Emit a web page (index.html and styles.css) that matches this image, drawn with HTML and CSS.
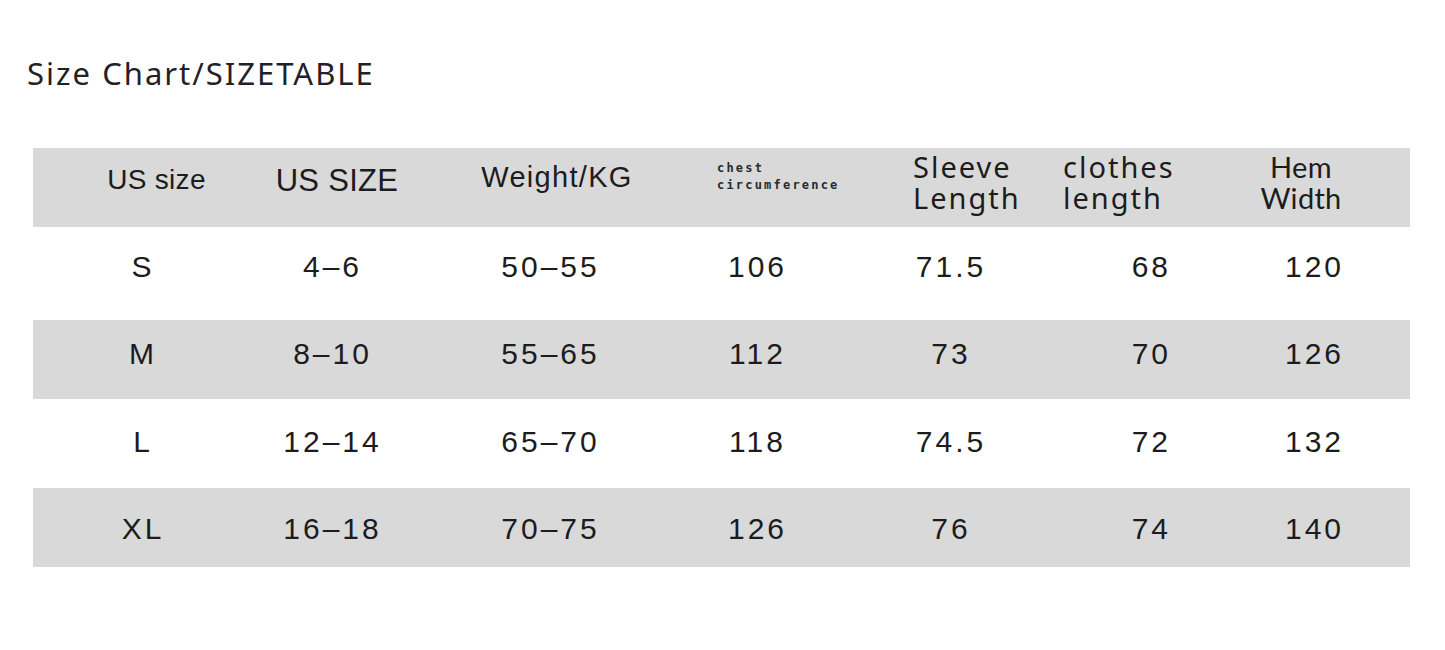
FILE: index.html
```html
<!DOCTYPE html>
<html>
<head>
<meta charset="utf-8">
<link rel="stylesheet" href="styles.css">
</head>
<body>
<div class="page">
  <h1 class="title">Size Chart/SIZETABLE</h1>
  <div class="table">
    <div class="row head">
      <div class="cell c1"><span class="h1t">US size</span></div>
      <div class="cell c2"><span class="h2t">US SIZE</span></div>
      <div class="cell c3"><span class="h3t">Weight/KG</span></div>
      <div class="cell c4"><span class="h4t"><span class="ln">chest</span><span class="ln">circumference</span></span></div>
      <div class="cell c5"><span class="h5t"><span class="ln">Sleeve</span><span class="ln">Length</span></span></div>
      <div class="cell c6"><span class="h6t"><span class="ln">clothes</span><span class="ln">length</span></span></div>
      <div class="cell c7"><span class="h7t"><span class="ln">Hem</span><span class="ln">Width</span></span></div>
    </div>
    <div class="row body r-s">
      <div class="cell c1">S</div>
      <div class="cell c2">4–6</div>
      <div class="cell c3">50–55</div>
      <div class="cell c4">106</div>
      <div class="cell c5">71.5</div>
      <div class="cell c6">68</div>
      <div class="cell c7">120</div>
    </div>
    <div class="row body r-m gray">
      <div class="cell c1">M</div>
      <div class="cell c2">8–10</div>
      <div class="cell c3">55–65</div>
      <div class="cell c4">112</div>
      <div class="cell c5">73</div>
      <div class="cell c6">70</div>
      <div class="cell c7">126</div>
    </div>
    <div class="row body r-l">
      <div class="cell c1">L</div>
      <div class="cell c2">12–14</div>
      <div class="cell c3">65–70</div>
      <div class="cell c4">118</div>
      <div class="cell c5">74.5</div>
      <div class="cell c6">72</div>
      <div class="cell c7">132</div>
    </div>
    <div class="row body r-xl gray">
      <div class="cell c1">XL</div>
      <div class="cell c2">16–18</div>
      <div class="cell c3">70–75</div>
      <div class="cell c4">126</div>
      <div class="cell c5">76</div>
      <div class="cell c6">74</div>
      <div class="cell c7">140</div>
    </div>
  </div>
</div>
</body>
</html>
```

FILE: styles.css
```css
html, body {
  margin: 0;
  padding: 0;
  background: #ffffff;
}

.page {
  width: 1445px;
  height: 650px;
  overflow: hidden;
  color: #1c1c1e;
}

.title {
  margin: 0;
  padding: 54px 0 0 27px;
  height: 92px;
  box-sizing: border-box;
  font-family: "Noto Sans", Lato, sans-serif;
  font-weight: 400;
  font-size: 31px;
  line-height: 38px;
  letter-spacing: 2px;
  color: #222226;
}

.table {
  margin-left: 33px;
  margin-top: 56px;
  width: 1377px;
}

.row {
  display: grid;
  grid-template-columns: 217px 162px 274px 140px 230px 166px 188px;
  box-sizing: border-box;
}

.gray, .head {
  background: #d9d9d9;
}

.head {
  height: 79px;
  align-items: start;
}

.body {
  font-family: "Liberation Sans", Arial, sans-serif;
  font-size: 30px;
  line-height: 30px;
  letter-spacing: 3px;
  align-items: start;
}

.r-s { height: 93px; padding-top: 25px; }
.r-m { height: 79px; padding-top: 19px; }
.r-l { height: 89px; padding-top: 28px; }
.r-xl { height: 79px; padding-top: 26px; }

.body .cell { text-align: center; padding-left: 3px; }
.body .c5 { padding-left: 20px; }
.body .c6 { text-align: right; padding-right: 51px; }
.body .c7 { padding-right: 6px; }

.head .cell { display: block; }

.ln { display: block; }

.h1t, .h2t, .h3t {
  display: block;
  font-family: "Liberation Sans", Arial, sans-serif;
  text-align: center;
}
.h1t { font-size: 28px; padding: 16px 0 0 30px; line-height: 32px; letter-spacing: 0.3px; }
.h2t { font-size: 31px; padding: 16px 0 0 12px; line-height: 34px; letter-spacing: 0.3px; }
.h3t { font-size: 29px; padding: 12px 0 0 16px; line-height: 34px; letter-spacing: 1.3px; }

.h4t {
  display: block;
  padding: 12px 0 0 31px;
  font-family: "DejaVu Sans Mono", monospace;
  font-size: 12px;
  line-height: 17px;
  letter-spacing: 2.2px;
  font-weight: 700;
  color: #2a2a2e;
}

.h5t, .h6t, .h7t {
  display: block;
  font-family: "Noto Sans", Lato, sans-serif;
  font-size: 29px;
  line-height: 31px;
  letter-spacing: 2px;
  padding-top: 3px;
}
.h5t { padding-left: 87px; }
.h6t { padding-left: 7px; }
.h7t {
  font-family: Lato, "Noto Sans", sans-serif;
  letter-spacing: 0.3px;
  text-align: center;
  padding-right: 30px;
}
```
